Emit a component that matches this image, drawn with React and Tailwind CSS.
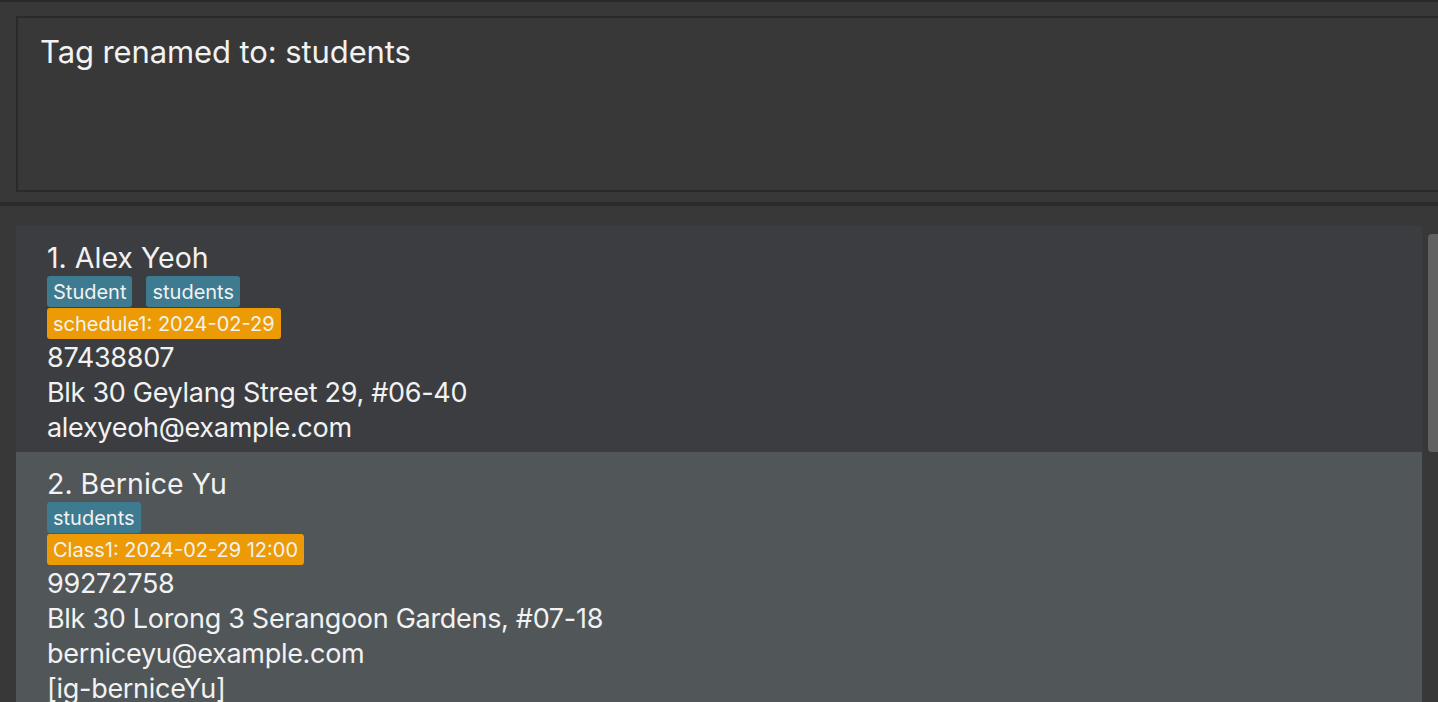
export default function App() {
  const people = [
    {
      name: '1. Alex Yeoh',
      tags: ['Student', 'students'],
      schedule: 'schedule1: 2024-02-29',
      lines: ['87438807', 'Blk 30 Geylang Street 29, #06-40', 'alexyeoh@example.com'],
      bg: 'bg-[#3c3d40] h-[226px]',
    },
    {
      name: '2. Bernice Yu',
      tags: ['students'],
      schedule: 'Class1: 2024-02-29 12:00',
      lines: ['99272758', 'Blk 30 Lorong 3 Serangoon Gardens, #07-18', 'berniceyu@example.com', '[ig-berniceYu]'],
      bg: 'bg-[#515658] h-[280px]',
    },
  ];

  return (
    <div className="w-[1438px] h-[702px] overflow-hidden bg-[#383838] text-[#f2f2f2] font-['Inter',sans-serif]">
      <div className="h-[2px] bg-[#2a2a2a]" />
      {/* Result display */}
      <div className="pt-[14px] pl-4">
        <div className="w-[1440px] h-[176px] border-2 border-[#2a2a2a] bg-[#383838] pl-[22px] pt-[14px]">
          <p className="text-[31px] leading-[40px] tracking-[-0.1px]">Tag renamed to: students</p>
        </div>
      </div>
      <div className="mt-[10px] h-[4px] bg-[#2a2a2a]" />
      {/* Person list */}
      <div className="flex mt-[20px]">
        <div className="w-[1422px] shrink-0 pl-4 flex flex-col">
          {people.map((p) => (
            <PersonCard key={p.name} p={p} />
          ))}
        </div>
        <div className="ml-[6px] mt-[8px] w-[10px] shrink-0 h-[218px] rounded-l-[4px] bg-[#616161]" />
      </div>
    </div>
  );
}

function PersonCard({ p }) {
  return (
    <div className={`${p.bg} pl-[31px] pt-[14px] shrink-0`}>
      <div className="text-[28.5px] leading-[35px]">{p.name}</div>
      <div className="flex gap-[14px] mt-[1px]">
        {p.tags.map((t) => (
          <span key={t} className="h-[31px] px-[6px] pt-[1px] rounded-[3px] bg-[#3e7a90] text-[20px] leading-[30px]">
            {t}
          </span>
        ))}
      </div>
      <div className="flex mt-[1px]">
        <span className="h-[31px] px-[6px] pt-[1px] rounded-[3px] bg-[#ec9b06] text-[20px] leading-[30px]">
          {p.schedule}
        </span>
      </div>
      <div className="mt-[1px]">
        {p.lines.map((l) => (
          <div key={l} className="text-[27px] leading-[35px] tracking-[-0.3px]">{l}</div>
        ))}
      </div>
    </div>
  );
}
